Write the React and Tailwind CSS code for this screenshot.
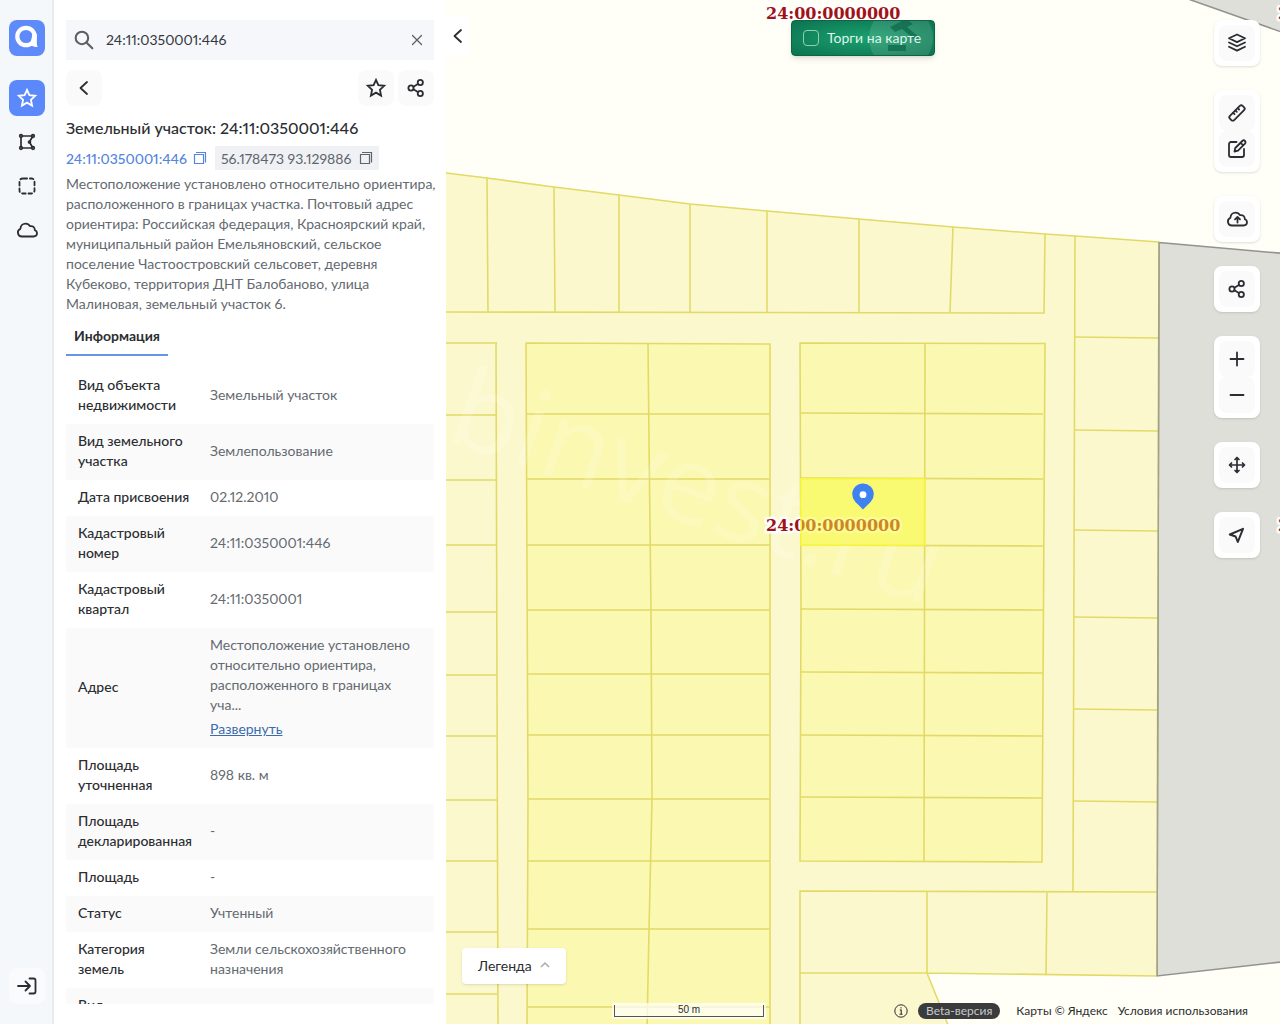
import React, { useState } from 'react';

// --- PARCEL DATA ---
const boundary = [
  [430, 171], [487, 178], [554, 187], [619, 195], [690, 204], [767, 211], [859, 219],
  [953, 227], [1045, 234], [1075, 236], [1159, 242], [1157, 976], [927, 973], [948, 1030], [430, 1030],
];

const leftRows = [343, 415, 480, 545, 612, 675, 736, 800, 861, 932, 994];
const midRows = [414, 479, 545, 610, 674, 735, 799, 861, 929, 1007];
const rightRows = [413, 478, 545, 609, 672, 735, 797];
const edgeRows = [337, 430, 530, 617, 709, 801];

const topDividers = [
  [487, 178, 488], [554, 187, 555], [619, 195, 619], [690, 204, 690],
  [767, 211, 767], [859, 219, 859], [953, 227, 950],
];

const rows = [
  ['Вид объекта недвижимости', 'Земельный участок'],
  ['Вид земельного участка', 'Землепользование'],
  ['Дата присвоения', '02.12.2010'],
  ['Кадастровый номер', '24:11:0350001:446'],
  ['Кадастровый квартал', '24:11:0350001'],
  ['Адрес', 'Местоположение установлено относительно ориентира, расположенного в границах уча...', true],
  ['Площадь уточненная', '898 кв. м'],
  ['Площадь декларированная', '-'],
  ['Площадь', '-'],
  ['Статус', 'Учтенный'],
  ['Категория земель', 'Земли сельскохозяйственного назначения'],
  ['Вид', ''],
];

// --- ICONS ---
function Icon({ size = 24, width = 1.8, className = '', children }) {
  return (
    <svg
      width={size}
      height={size}
      viewBox="0 0 24 24"
      fill="none"
      stroke="currentColor"
      strokeWidth={width}
      strokeLinecap="round"
      strokeLinejoin="round"
      className={`shrink-0 ${className}`}
      aria-hidden="true"
    >
      {children}
    </svg>
  );
}

const StarIcon = () => (
  <Icon>
    <path d="M12 4l2.400 5.200 5.800.6-4.300 4 1.200 5.800-5.100-3-5.100 3 1.200-5.800-4.300-4 5.800-.6z" strokeLinejoin="miter" />
  </Icon>
);

const ShareIcon = () => (
  <Icon>
    <circle cx="7" cy="12" r="2.600" />
    <circle cx="16.300" cy="6.500" r="2.600" />
    <circle cx="16.300" cy="17.500" r="2.600" />
    <path d="M9.400 10.700l4.500-2.700M9.400 13.300l4.500 2.700" />
  </Icon>
);

const ChevronLeft = () => (
  <Icon>
    <path d="M15 6l-6.500 6 6.500 6" />
  </Icon>
);

const CopyIcon = () => (
  <svg width="14" height="14" viewBox="0 0 14 14" fill="none" stroke="currentColor" className="shrink-0" aria-hidden="true">
    <path d="M1.500 3.500h9v9h-9zM3 1.500h9.500v10" strokeWidth="1.200" />
  </svg>
);

const PolygonIcon = () => (
  <Icon width={1.700}>
    <circle cx="6" cy="6" r="1.300" />
    <circle cx="18" cy="6" r="1.300" />
    <circle cx="14.500" cy="12" r="1" fill="currentColor" />
    <circle cx="6" cy="18" r="1.300" />
    <circle cx="18" cy="18" r="1.300" />
    <path d="M7.500 6h9M6 7.500v9M7.500 18h9M17.200 7.200l-2.400 4M14.800 12.800l2.400 4" />
  </Icon>
);

const DashedIcon = () => (
  <Icon>
    <rect x="4.500" y="4.500" width="15" height="15" rx="3" strokeDasharray="3.600 2.800" strokeDashoffset="-1" />
  </Icon>
);

const cloudPath = 'M7 18.500a4 4 0 0 1-1.600-7.700c.2-3.300 2.600-5.100 5.200-5.100 2 0 3.500 1 4.300 2.500 3-.7 5 1.300 4.900 3.900 1.400.5 2.200 1.500 2.200 3 0 2-1.500 3.400-3.500 3.400z';

const CloudIcon = () => (
  <Icon>
    <path d={cloudPath} />
  </Icon>
);

const LoginIcon = () => (
  <Icon>
    <path d="M3 12h12M10.500 7.500L15 12l-4.500 4.500M14.500 4.500h4a2 2 0 0 1 2 2v11a2 2 0 0 1-2 2h-4" />
  </Icon>
);

const LayersIcon = () => (
  <Icon>
    <path d="M12 3.500l8 3.800-8 3.800-8-3.800zM4 11.500l8 3.800 8-3.800M4 15.800l8 3.800 8-3.800" />
  </Icon>
);

const RulerIcon = () => (
  <Icon>
    <rect x="3" y="9" width="18" height="6" rx="2" transform="rotate(-45 12 12)" />
    <path d="M8.200 11.800l1.300 1.300M10.500 9.500l1.300 1.300M12.800 7.200l1.300 1.300" />
  </Icon>
);

const EditIcon = () => (
  <Icon>
    <path d="M11.500 5H6a2 2 0 0 0-2 2v11a2 2 0 0 0 2 2h11a2 2 0 0 0 2-2v-6" />
    <path d="M9.500 14.500l.8-3.500 7-7a1.900 1.900 0 0 1 2.700 2.700l-7 7zM15.700 5.800l2.500 2.500" />
  </Icon>
);

const UploadIcon = () => (
  <Icon>
    <path d={cloudPath} />
    <path d="M12.500 15.500v-5M10 12.300l2.500-2.300 2.500 2.300" />
  </Icon>
);

const PlusIcon = () => (
  <Icon>
    <path d="M5.500 12h13M12 5.500v13" />
  </Icon>
);

const MinusIcon = () => (
  <Icon>
    <path d="M5.500 12h13" />
  </Icon>
);

const MoveIcon = () => (
  <Icon width={1.700}>
    <path d="M12 5v14M5 12h14M10 6.500l2-2 2 2M10 17.500l2 2 2-2M6.500 10l-2 2 2 2M17.500 10l2 2-2 2" />
  </Icon>
);

const LocateIcon = () => (
  <Icon width={2}>
    <path d="M18 5.800L4.800 11.500l5.800 2 2.200 5.500z" />
  </Icon>
);

const navItems = [
  ['Избранное', StarIcon],
  ['Полигон', PolygonIcon],
  ['Область', DashedIcon],
  ['Облако', CloudIcon],
];

const toolGroups = [
  [['Слои', LayersIcon]],
  [['Линейка', RulerIcon], ['Рисование', EditIcon]],
  [['Загрузить', UploadIcon]],
  [['Поделиться картой', ShareIcon]],
  [['Приблизить', PlusIcon], ['Отдалить', MinusIcon]],
  [['Переместить', MoveIcon]],
  [['Моё местоположение', LocateIcon]],
];

function ParcelLabel({ x, y }) {
  return (
    <text
      x={x}
      y={y}
      className="font-['DejaVu_Serif',serif] text-[16px] font-bold"
      fill="#a11218"
      stroke="#ffffff"
      strokeWidth="5"
      strokeLinejoin="round"
      paintOrder="stroke"
    >
      24:00:0000000
    </text>
  );
}

// --- MAP ---
function CadastralMap() {
  return (
    <svg
      className="absolute inset-0 h-full w-full"
      viewBox="446 0 834 1024"
      preserveAspectRatio="xMinYMin slice"
      role="img"
      aria-label="Кадастровая карта"
    >
      <rect x="446" width="834" height="1024" fill="#fffff7" />
      <path d="M1191 0L1290 35V-5H1176z" fill="#dedfd9" stroke="#92938e" strokeWidth="1.500" />
      <path d="M1159 242.500L1290 254V961L1157 976z" fill="#dedfd9" stroke="#92938e" strokeWidth="1.500" />
      <polygon points={boundary.join(' ')} fill="#fcf8ce" />

      <g fill="#fbf8b2">
        <path d="M526 343L770 344V1030H527L528 800z" />
        <path d="M800 343H1045L1042 861H800z" />
      </g>

      <g fill="none" stroke="#e2da67" strokeWidth="1.600">
        <path d="M430 171L487 178 554 187 619 195 690 204 767 211 859 219 953 227 1045 234 1075 236 1159 242" />
        <path d="M430 312L1044 313L1045 234" />
        {topDividers.map(([x, y, x2]) => (
          <path key={x} d={`M${x} ${y}L${x2} 312`} />
        ))}

        <path d="M496 343L498 1030" />
        {leftRows.map((y) => (
          <path key={y} d={`M430 ${y}H497`} />
        ))}

        <path d="M527 1030L528 800 526 343 770 344V1030" />
        <path d="M648 343L649 440 651 610 652 799 649 930 647 1030" />
        {midRows.map((y) => (
          <path key={y} d={`M527 ${y}H770`} />
        ))}

        <path d="M800 343L1045 343.500 1042 862 800 861 801 610z" />
        <path d="M925 343L924 862" />
        {rightRows.map((y) => (
          <path key={y} d={`M800 ${y}L1043 ${y + 1}`} />
        ))}

        <path d="M1075 236L1073 891" />
        {edgeRows.map((y) => (
          <path key={y} d={`M1074 ${y}L1158 ${y + 1}`} />
        ))}
        <path d="M800 1030V891L1157 892M927 891V973M1047 891L1046 975M800 973H927L1157 976M927 973L950 1030" />
      </g>
      <path d="M1159 242L1157 976" stroke="#a3a27c" strokeWidth="1.600" />

      <text
        transform="translate(444 440) rotate(19)"
        className="font-['Open_Sans',sans-serif] text-[110px]"
        fill="#ffffff"
        fillOpacity="0.140"
      >
        binvest.ru
      </text>

      <ParcelLabel x={766} y={19} />
      <ParcelLabel x={1278} y={19} />
      <ParcelLabel x={766} y={531} />
      <ParcelLabel x={1278} y={531} />

      {/* Selected parcel */}
      <path d="M801 479H924.500V545H801z" fill="#fafa32" fillOpacity="0.500" stroke="#fbfb3c" strokeOpacity="0.700" strokeWidth="2" />
      <path d="M863 509.500l-7.800-7.800a10.800 10.800 0 1 1 15.600 0z" fill="#3e82f1" />
      <circle cx="863" cy="494.700" r="3.400" fill="#ffffff" />
    </svg>
  );
}

function Sidebar() {
  return (
    <nav className="flex w-[54px] shrink-0 flex-col items-center border-r-2 border-[#e6ecf1] bg-[#f4f8fa] py-5 pl-0.5 text-[#2b2d31]">
      <a href="#" aria-label="Главная" className="mb-6 block size-9 rounded-lg bg-[#5f8bfa] text-white">
        <svg width="36" height="36" viewBox="0 0 36 36" fill="none" aria-hidden="true">
          <circle cx="17" cy="16.500" r="8.700" stroke="currentColor" strokeWidth="4.200" />
          <path d="M23.500 14h4.300v8c0 2 .2 3.500.8 4.900-3 .3-5.600-.4-7.300-2.400z" fill="currentColor" />
        </svg>
      </a>
      <div className="flex flex-col gap-2">
        {navItems.map(([label, NavIcon], i) => (
          <button
            key={label}
            type="button"
            aria-label={label}
            className={`flex size-9 items-center justify-center rounded-lg ${i === 0 ? 'bg-[#5b88fb] text-white' : ''}`}
          >
            <NavIcon />
          </button>
        ))}
      </div>
      <button type="button" aria-label="Войти" className="mt-auto flex size-9 items-center justify-center rounded-lg bg-[#f9fbfc]">
        <LoginIcon />
      </button>
    </nav>
  );
}

function ObjectPanel() {
  const [query, setQuery] = useState('24:11:0350001:446');
  const squareButton = 'flex size-9 items-center justify-center rounded-lg bg-[#fafafb]';

  return (
    <aside className="flex w-[392px] shrink-0 flex-col bg-white px-3 py-5">
      <div className="flex h-10 shrink-0 items-center bg-[#f5f7fb] px-2">
        <Icon size={20} width={2.500} className="text-[#5c6066]">
          <circle cx="9.500" cy="9.500" r="7.500" />
          <path d="M15.500 15.500l6.500 6.500" />
        </Icon>
        <input
          type="text"
          aria-label="Поиск"
          value={query}
          onChange={(e) => setQuery(e.target.value)}
          className="ml-3 min-w-0 flex-1 bg-transparent pb-0.5 proportional-nums text-[#33363b] outline-none"
        />
        <button type="button" aria-label="Очистить" onClick={() => setQuery('')} className="text-[#5c6066]">
          <Icon size={18} width={1.700}>
            <path d="M6 6l12 12M18 6L6 18" />
          </Icon>
        </button>
      </div>

      <div className="mt-2.5 flex shrink-0 gap-1 text-[#2b2d31]">
        <button type="button" aria-label="Назад" className={`${squareButton} mr-auto`}>
          <ChevronLeft />
        </button>
        <button type="button" aria-label="В избранное" className={squareButton}>
          <StarIcon />
        </button>
        <button type="button" aria-label="Поделиться" className={squareButton}>
          <ShareIcon />
        </button>
      </div>

      <h1 className="mt-2.5 text-[16px] leading-6 font-medium whitespace-nowrap text-[#2b2d31]">
        Земельный участок: 24:11:0350001:446
      </h1>
      <div className="mt-1.5 flex h-6 shrink-0 items-center gap-2">
        <button type="button" className="flex items-center gap-1.5 font-medium text-[#5485e0]">
          24:11:0350001:446
          <CopyIcon />
        </button>
        <button type="button" className="flex h-6 items-center gap-2 bg-[#eff1f5] px-1.5 text-[#5f646b]">
          56.178473 93.129886
          <CopyIcon />
        </button>
      </div>
      <p className="mt-1 -mr-1 leading-5 text-[#646a70]">
        Местоположение установлено относительно ориентира, расположенного в границах участка. Почтовый адрес
        ориентира: Российская федерация, Красноярский край, муниципальный район Емельяновский, сельское
        поселение Частоостровский сельсовет, деревня Кубеково, территория ДНТ Балобаново, улица Малиновая,
        земельный участок 6.
      </p>
      <div className="mt-0.5 flex shrink-0">
        <button type="button" className="h-10 border-b-2 border-[#6695e5] px-2 font-bold text-[#2b2d31]">
          Информация
        </button>
      </div>

      <div className="mt-3 min-h-0 flex-1 overflow-hidden">
        <table className="w-full table-fixed text-left leading-5">
          <tbody>
            {rows.map(([name, value, long]) => (
              <tr key={name} className="even:bg-[#fafafb]">
                <th scope="row" className="w-[132px] pt-[7px] pr-1.5 pb-[9px] pl-3 font-medium text-[#2b2d31]">{name}</th>
                <td className="pt-[7px] pr-3 pb-[9px] pl-3 text-[#646a70]">
                  {value}
                  {long && (
                    <a href="#" className="mt-1 block text-[#3a6cae] underline">Развернуть</a>
                  )}
                </td>
              </tr>
            ))}
          </tbody>
        </table>
      </div>
    </aside>
  );
}

export default function App() {
  const [auctions, setAuctions] = useState(false);

  return (
    <div className="flex h-screen overflow-hidden font-['Lato',sans-serif] text-[14px] proportional-nums text-[#2b2d31]">
      <Sidebar />
      <ObjectPanel />

      <main className="relative min-w-0 flex-1 overflow-hidden">
        <CadastralMap />

        <button type="button" aria-label="Свернуть панель" className="absolute top-4 left-0 flex h-10 w-[23px] items-center justify-center rounded-r-lg bg-white">
          <ChevronLeft />
        </button>

        <label className="absolute top-5 left-1/2 flex h-9 w-36 -translate-x-1/2 items-center gap-2 overflow-hidden rounded-sm border border-[#0b6548] bg-radial from-[#1ba06f] to-[#0c7350] px-[11px] text-[#dff5ea] shadow-md">
          <svg className="absolute top-0 right-0" width="66" height="36" viewBox="0 0 66 36" aria-hidden="true">
            <circle cx="33" cy="17" r="32" fill="#ffffff" fillOpacity="0.120" />
            <path d="M22 6L38-2l7 5-6 3 12 10-4 3L34 8l-7 3zM20 24h18v6H20z" fill="#075f42" fillOpacity="0.600" />
          </svg>
          <input
            type="checkbox"
            checked={auctions}
            onChange={(e) => setAuctions(e.target.checked)}
            className="size-4 shrink-0 appearance-none rounded-sm border border-[#8fd0b4] checked:bg-[#8fd0b4]"
          />
          <span className="relative pb-0.5 whitespace-nowrap">Торги на карте</span>
        </label>

        <div className="absolute top-5 right-5 flex flex-col gap-6">
          {toolGroups.map((group) => (
            <div key={group[0][0]} className="flex flex-col rounded-lg bg-white p-[5px] shadow">
              {group.map(([label, ToolIcon]) => (
                <button key={label} type="button" aria-label={label} className="flex size-9 items-center justify-center rounded-lg bg-[#fafafb]">
                  <ToolIcon />
                </button>
              ))}
            </div>
          ))}
        </div>

        <button type="button" className="absolute bottom-10 left-4 flex h-9 items-center gap-2 rounded-sm bg-white px-4 pb-0.5 shadow">
          Легенда
          <svg width="10" height="8" viewBox="0 0 10 8" fill="none" stroke="#a8abb0" strokeWidth="1.500" aria-hidden="true">
            <path d="M1 6l4-4 4 4" />
          </svg>
        </button>

        <footer className="absolute inset-x-0 bottom-1 flex items-center justify-between pr-8 pl-[166px] text-[12px] whitespace-nowrap">
          <div className="bg-white/70 p-0.5">
            <div className="h-3 w-[150px] border border-t-0 border-[#55565a] text-center font-['Liberation_Sans',sans-serif] text-[10px] leading-[10px]">
              50 m
            </div>
          </div>
          <div className="flex items-center">
            <svg width="14" height="14" viewBox="0 0 14 14" fill="none" stroke="currentColor" aria-hidden="true">
              <circle cx="7" cy="7" r="6.200" />
              <path d="M5.700 6h1.500v4M5.500 10.200h3M7 3.300v1.200" strokeWidth="1.100" />
            </svg>
            <span className="mr-4 ml-2.5 h-4 rounded-lg bg-[#3a3b3c] px-2 leading-4 text-[#c9c9ca]">Beta-версия</span>
            <a href="#" className="mr-2.5">Карты © Яндекс</a>
            <a href="#">Условия использования</a>
          </div>
        </footer>
      </main>
    </div>
  );
}
